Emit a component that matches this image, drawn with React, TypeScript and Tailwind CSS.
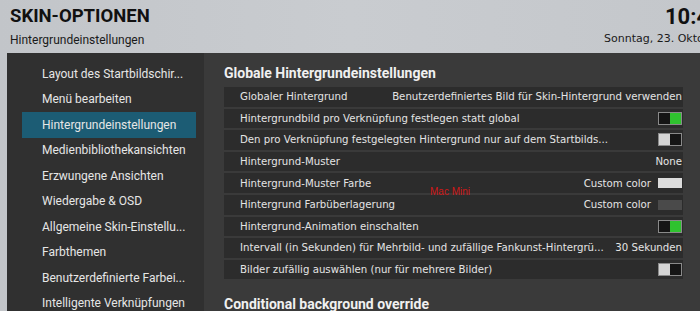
import { Fragment } from 'react'

type Row =
  | { label: string; kind: 'text'; value: string }
  | { label: string; kind: 'toggle'; on: boolean }
  | { label: string; kind: 'color'; value: string; swatch: 'light' | 'dark' }

const menu = [
  'Layout des Startbildschir...',
  'Menü bearbeiten',
  'Hintergrundeinstellungen',
  'Medienbibliothekansichten',
  'Erzwungene Ansichten',
  'Wiedergabe & OSD',
  'Allgemeine Skin-Einstellu...',
  'Farbthemen',
  'Benutzerdefinierte Farbei...',
  'Intelligente Verknüpfungen',
]

const rows: Row[] = [
  { label: 'Globaler Hintergrund', kind: 'text', value: 'Benutzerdefiniertes Bild für Skin-Hintergrund verwenden' },
  { label: 'Hintergrundbild pro Verknüpfung festlegen statt global', kind: 'toggle', on: true },
  { label: 'Den pro Verknüpfung festgelegten Hintergrund nur auf dem Startbilds...', kind: 'toggle', on: false },
  { label: 'Hintergrund-Muster', kind: 'text', value: 'None' },
  { label: 'Hintergrund-Muster Farbe', kind: 'color', value: 'Custom color', swatch: 'light' },
  { label: 'Hintergrund Farbüberlagerung', kind: 'color', value: 'Custom color', swatch: 'dark' },
  { label: 'Hintergrund-Animation einschalten', kind: 'toggle', on: true },
  { label: 'Intervall (in Sekunden) für Mehrbild- und zufällige Fankunst-Hintergrü...', kind: 'text', value: '30 Sekunden' },
  { label: 'Bilder zufällig auswählen (nur für mehrere Bilder)', kind: 'toggle', on: false },
]

function Toggle({ on }: { on: boolean }) {
  return (
    <div className="flex w-[24px] h-[13px] border border-[#8a8a8a] bg-[#151515]">
      {on ? (
        <>
          <div className="flex-1 bg-[#151515]" />
          <div className="flex-1 bg-[#2fc22f]" />
        </>
      ) : (
        <>
          <div className="flex-1 bg-[#d4d4d4]" />
          <div className="flex-1 bg-[#151515]" />
        </>
      )}
    </div>
  )
}

function RowValue({ row }: { row: Row }) {
  if (row.kind === 'text') return <span>{row.value}</span>
  if (row.kind === 'toggle') return <Toggle on={row.on} />
  return (
    <div className="flex items-center gap-[7px]">
      <span>{row.value}</span>
      <div className={`w-[24px] h-[10px] ${row.swatch === 'light' ? 'bg-[#dcdcdc]' : 'bg-[#4a4a4a]'}`} />
    </div>
  )
}

export default function App() {
  return (
    <div className="relative w-[700px] h-[311px] overflow-hidden bg-gradient-to-r from-[#c2c5c9] via-[#c9ccd0] to-[#c4c7cb] font-['Roboto',sans-serif]">
      {/* Header */}
      <header className="flex justify-between h-[53px]">
        <div className="pl-[10px] pt-[5px]">
          <h1 className="text-[18.5px] font-bold leading-[22px] text-[#111]">SKIN-OPTIONEN</h1>
          <p className="text-[12px] leading-[14px] mt-[6px] text-[#1a1a1a]">Hintergrundeinstellungen</p>
        </div>
        <div className="flex flex-col items-start pt-[5px] w-[96px] overflow-hidden">
          <span className="pl-[61px] text-[22px] font-bold leading-[24px] text-[#111]">10:45</span>
          <span className="mt-[3px] text-[11px] leading-[14px] text-[#1a1a1a] whitespace-nowrap font-['DejaVu_Sans',sans-serif]">
            Sonntag, 23. Oktober
          </span>
        </div>
      </header>

      {/* Body */}
      <div className="flex ml-[7px] h-[258px]">
        {/* Sidebar */}
        <nav className="w-[197px] bg-[#303030] pt-[8px]">
          {menu.map((item) => (
            <div
              key={item}
              className={`flex items-center h-[25.5px] ml-[15px] w-[174px] pl-[20px] text-[12px] text-[#e6e6e6] whitespace-nowrap ${
                item === 'Hintergrundeinstellungen' ? 'bg-[#1c5c74]' : ''
              }`}
            >
              {item}
            </div>
          ))}
        </nav>

        {/* Main */}
        <main className="flex-1 bg-[#3a3a3a] pl-[20px] pr-[17px] pt-[11px]">
          <h2 className="text-[14px] font-bold leading-[18px] text-[#f0f0f0]">Globale Hintergrundeinstellungen</h2>
          <div className="mt-[5px] flex flex-col gap-[2px] font-['DejaVu_Sans',sans-serif] text-[10.2px] text-[#e4e4e4]">
            {rows.map((row) => (
              <Fragment key={row.label}>
                <div className="flex items-center justify-between gap-[8px] h-[19.6px] bg-[#2c2c2c] pl-[16px] pr-[1px] whitespace-nowrap">
                  <span>{row.label}</span>
                  <RowValue row={row} />
                </div>
              </Fragment>
            ))}
          </div>
          <h2 className="mt-[16px] text-[14px] font-bold leading-[18px] text-[#f0f0f0]">Conditional background override</h2>
        </main>
      </div>

      {/* Watermark */}
      <span className="absolute left-[430px] top-[184px] text-[10px] text-[#d01818] font-['Liberation_Sans',sans-serif]">Mac Mini</span>
    </div>
  )
}
